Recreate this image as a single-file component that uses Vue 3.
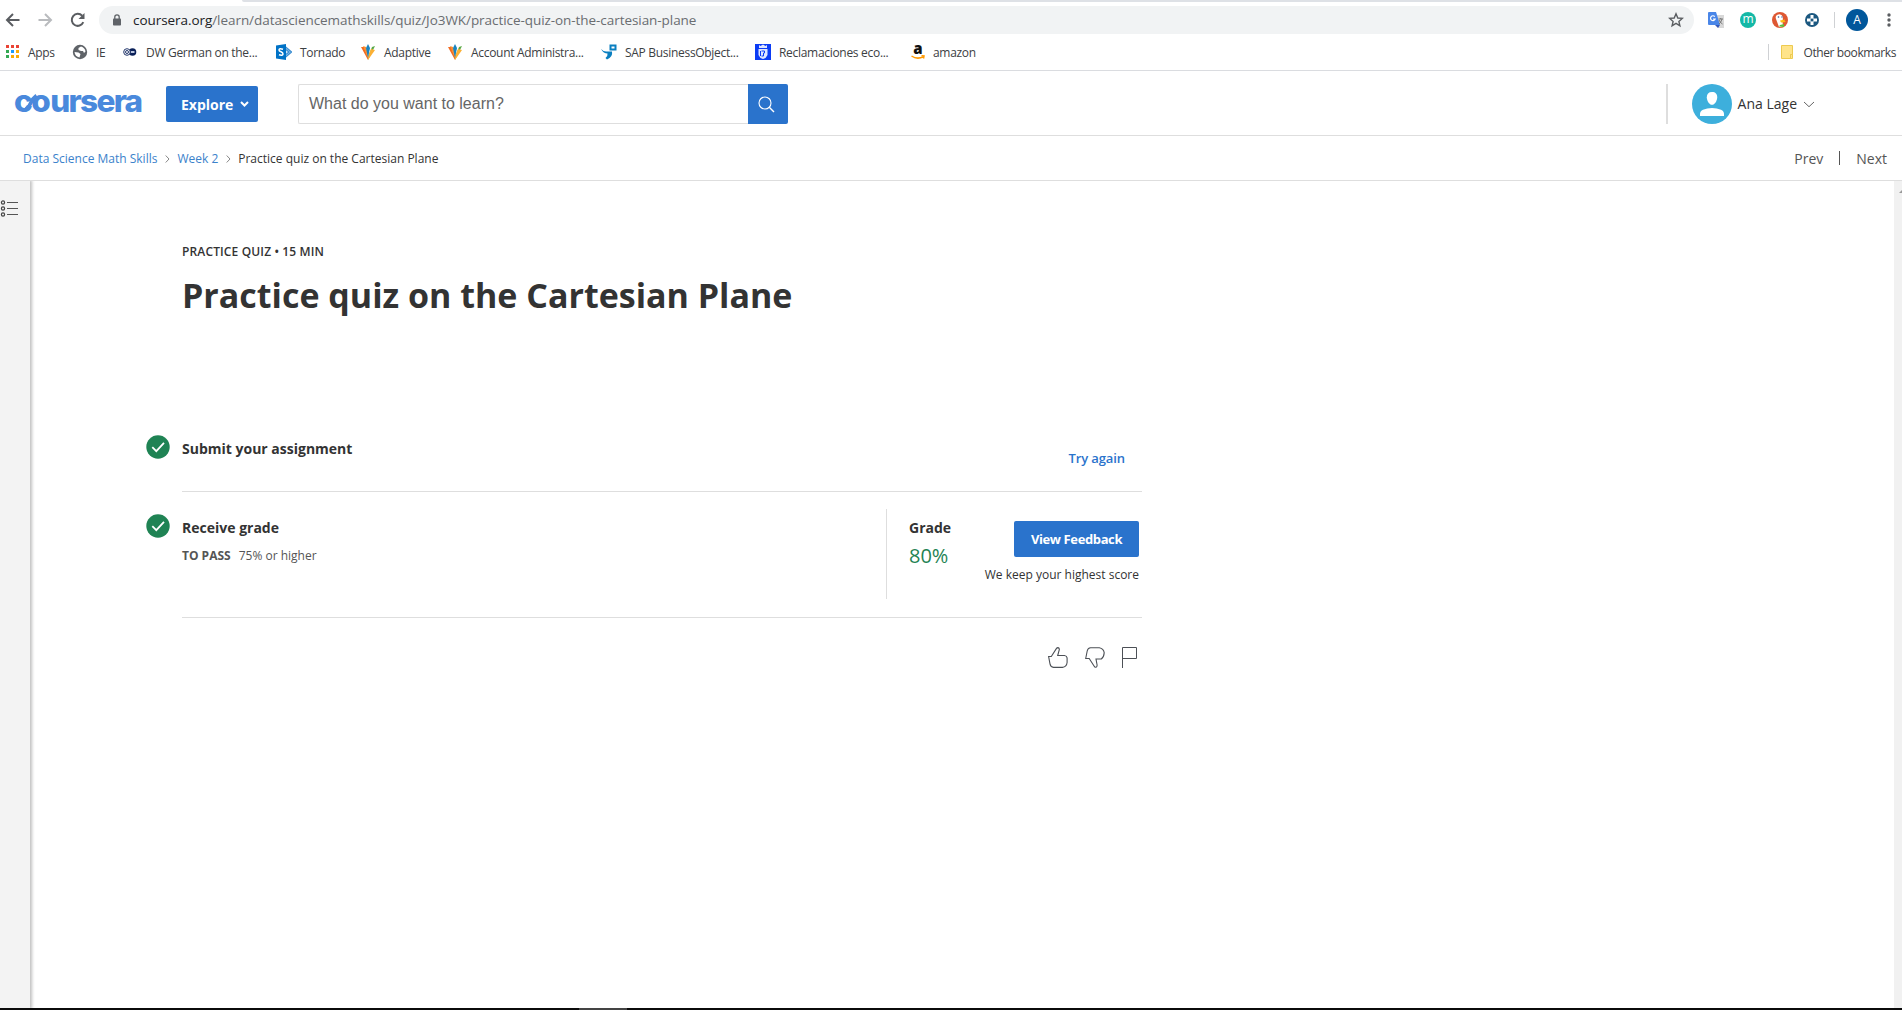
<script setup>
const bookmarks = [
  { icon: 'apps', label: 'Apps', width: 68 },
  { icon: 'globe', label: 'IE', width: 50 },
  { icon: 'dw', label: 'DW German on the...', width: 154 },
  { icon: 'sharepoint', label: 'Tornado', width: 84 },
  { icon: 'adaptive', label: 'Adaptive', width: 87 },
  { icon: 'adaptive', label: 'Account Administra...', width: 154 },
  { icon: 'sap', label: 'SAP BusinessObject...', width: 154 },
  { icon: 'madrid', label: 'Reclamaciones eco...', width: 154 },
  { icon: 'amazon', label: 'amazon', width: 80 },
]
const appColors = ['#ea4335', '#ea4335', '#ea4335', '#34a853', '#1a9bfc', '#fbab05', '#34a853', '#fbab05', '#fbab05']
</script>

<template>
  <div class="screen">
    <div class="tabstrip"></div>
    <div class="toolbar">
      <svg class="nav back" width="16" height="16" viewBox="0 0 16 16"><path d="M14.5 8H2M8 2L2 8l6 6" fill="none" stroke="#5a5d61" stroke-width="2" /></svg>
      <svg class="nav forward" width="16" height="16" viewBox="0 0 16 16"><path d="M1.500 8H14M8 2l6 6-6 6" fill="none" stroke="#b9bbbe" stroke-width="2" /></svg>
      <svg class="nav reload" width="16" height="16" viewBox="0 0 16 16"><path d="M13.300 10.200A6 6 0 1 1 12.200 3.800" fill="none" stroke="#5a5d61" stroke-width="2" /><path d="M14.500 1v6h-6z" fill="#5a5d61" /></svg>
      <div class="omnibox">
        <svg width="8" height="12" viewBox="0 0 8 12"><path d="M.8 4.500h6.400q.8 0 .8.800v5.400q0 .8-.8.800H.8q-.8 0-.8-.8V5.300q0-.8.8-.8z" fill="#5f6368" /><path d="M1.800 5V3a2.200 2.200 0 0 1 4.400 0v2" fill="none" stroke="#5f6368" stroke-width="1.300" /></svg>
        <span class="url"><b>coursera.org</b>/learn/datasciencemathskills/quiz/Jo3WK/practice-quiz-on-the-cartesian-plane</span>
        <svg class="star" width="16" height="16" viewBox="0 0 16 16"><path d="M8 1.800l1.800 4.200 4.500.4-3.400 3 1 4.400L8 11.400l-3.900 2.400 1-4.400-3.400-3 4.500-.4z" fill="none" stroke="#5a5d61" stroke-width="1.400" /></svg>
      </div>
      <svg class="ext translate" width="16" height="16" viewBox="0 0 16 16"><path d="M7 3h9v13H10z" fill="#d8d8d8" /><path d="M0 1q0-1 1-1h7l4 13H1q-1 0-1-1z" fill="#4a86e8" /><path d="M7 13h5l-2 3z" fill="#3457b8" /><path d="M6.800 4.600A2.400 2.400 0 1 0 7.200 7H5" fill="none" stroke="#fff" stroke-width="1.200" /><path d="M10.500 7h4.500M12.700 6v1M14 7q-1 3.500-3 5M11 8q1 2.500 3.500 4" fill="none" stroke="#777" /></svg>
      <span class="ext mdot">m</span>
      <svg class="ext duck" width="16" height="16" viewBox="0 0 16 16"><circle cx="8" cy="8" r="8" fill="#de5833" /><path d="M5 3q4-2 6 2l-.5 5 .5 4q-2 1.500-4 1L4 7q-1-3 1-4z" fill="#fff" /><path d="M8 8.500l5-1-.5 1.500L14 10l-5 .5z" fill="#fdbd14" /><path d="M8 13l4-1v3l-5-.5z" fill="#5dbf3c" /><circle cx="6.500" cy="5" r=".8" fill="#35508a" /><circle cx="10" cy="5" r=".7" fill="#35508a" /></svg>
      <svg class="ext puzzle" width="14" height="14" viewBox="0 0 14 14"><circle cx="7" cy="7" r="7" fill="#1c5880" /><path d="M5.500 2h3v3.500H12v3H8.500V12h-3V8.500H2v-3h3.500z" fill="#fff" /><path d="M5.600 5.600h2.800v2.800H5.600z" fill="#1c5880" /></svg>
      <i class="tooldiv"></i>
      <span class="profile">A</span>
      <svg class="dots" width="4" height="14" viewBox="0 0 4 14"><circle cx="2" cy="2" r="1.700" fill="#5a5d61" /><circle cx="2" cy="7" r="1.700" fill="#5a5d61" /><circle cx="2" cy="12" r="1.700" fill="#5a5d61" /></svg>
    </div>

    <div class="bookmarks">
      <div v-for="(b, i) in bookmarks" :key="i" class="bookmark" :style="{ width: b.width + 'px' }">
        <svg width="16" height="16" viewBox="0 0 16 16">
          <g v-if="b.icon === 'apps'"><rect v-for="(c, n) in appColors" :key="n" :x="2 + (n % 3) * 5" :y="1 + Math.floor(n / 3) * 5" width="3" height="3" :fill="c" /></g>
          <g v-else-if="b.icon === 'globe'"><circle cx="8" cy="8" r="7.200" fill="#5f6368" /><path d="M9 2.600L6.500 4v2L9 7h2l1 2 1.500-1.500Q13 4 9 2.600zM2.500 8l4 .5 2 1.500-1 3.500Q3 12.500 2.500 8z" fill="#fff" /></g>
          <g v-else-if="b.icon === 'dw'"><circle cx="10.500" cy="8" r="3.800" fill="#0a2059" /><circle cx="5" cy="8" r="3.300" fill="#fff" stroke="#24386d" stroke-width="1" /><circle cx="5" cy="8" r="1.500" fill="none" stroke="#24386d" /><path d="M9 8h3.500" stroke="#b9c4dd" stroke-width="2" /></g>
          <g v-else-if="b.icon === 'sharepoint'"><path d="M9 2.500L15.500 8 9 13.500zM10 5.500L13 8l-3 2.500" fill="#cfe4f6" stroke="#3d8fd2" stroke-width="1.300" /><path d="M0 1.500L10 0v16L0 14.500z" fill="#0072c6" /><path d="M7 5.200Q3 3.800 3 6q0 1 2 1.800T7 10q-.4 2-4 .8" fill="none" stroke="#fff" stroke-width="1.500" /></g>
          <g v-else-if="b.icon === 'adaptive'"><path d="M1 3h3l4 10v3z" fill="#f26b21" /><path d="M3 2l3 1 2 6v5z" fill="#f79232" /><path d="M15 2l-3 1-4 10v3z" fill="#58a845" /><path d="M15 6l-4-1-3 7v4z" fill="#fbb034" /><path d="M8 0l2 4-2 10-2-10z" fill="#1a84bf" /></g>
          <g v-else-if="b.icon === 'sap'"><path d="M9.500 1.500h5v4h-5z" fill="#fff" stroke="#0a7fc0" stroke-width="2" /><path d="M0 5q3 3 6 2.500h5Q12 13 6 15.500L4.500 14Q7 12 6.500 9.500 2.500 9.500 0 5z" fill="#0a7fc0" /></g>
          <g v-else-if="b.icon === 'madrid'"><path d="M0 0h16v16H0z" fill="#0b3cf5" /><path d="M4 1l1.500 1L8 .5l2.500 1.500L12 1v3H4zM3.500 5h9v6q-1 3-4.500 4-3.500-1-4.500-4z" fill="#dfe6ff" /><path d="M6.500 7h3v2h-1v3h-2M5.500 7v5" fill="none" stroke="#0b3cf5" /></g>
        </svg>
        <span v-if="b.icon === 'amazon'" class="amz">a<svg width="14" height="5" viewBox="0 0 14 5"><path d="M.5 1q6 4 12 .5M10.500.7l2.500.3-.5 2.500" fill="none" stroke="#f90" stroke-width="1.500" /></svg></span>
        <span class="bm-label">{{ b.label }}</span>
      </div>
      <i class="bm-div"></i>
      <svg class="folder" width="12" height="14" viewBox="0 0 12 14"><path d="M.5.5h11v9H9.500v4H.5z" fill="#ffe48a" stroke="#edca50" /><path d="M9.500 9.500h2v4h-2z" fill="#ffe48a" stroke="#edca50" /></svg>
      <span class="bm-label other">Other bookmarks</span>
    </div>

    <header class="header">
      <div class="logo">
        <span class="lc">c</span><span class="lo">o</span><span class="lrest">ursera</span>
        <svg class="loop" width="18" height="19" viewBox="0 0 18 19"><path d="M4 16Q7.500 13.500 9 9.500T14.500 2.500" fill="none" stroke="#4a89dc" stroke-width="3.600" /></svg>
      </div>
      <button class="explore"><span>Explore</span><svg width="9" height="6" viewBox="0 0 9 6"><path d="M1 1l3.500 3.500L8 1" fill="none" stroke="#fff" stroke-width="2" /></svg></button>
      <div class="search"><span class="placeholder">What do you want to learn?</span></div>
      <div class="search-btn"><svg width="17" height="17" viewBox="0 0 17 17"><circle cx="7" cy="7" r="6" fill="none" stroke="#fff" stroke-width="1.100" /><path d="M11.300 11.300L16 16" stroke="#fff" stroke-width="1.400" /></svg></div>
      <div class="user">
        <svg width="40" height="40" viewBox="0 0 40 40"><circle cx="20" cy="20" r="20" fill="#3dafdc" /><path d="M20 8c3.500 0 5.200 2 5.200 5.200S23 20.800 20 20.800s-5.200-4.400-5.200-7.600S16.500 8 20 8z" fill="#fff" /><path d="M8 32v-2q0-3 3-4.300Q15 24 20 24t9 1.700q3 1.300 3 4.300v2z" fill="#fff" /></svg>
        <span class="name">Ana Lage</span>
        <svg class="caret" width="12" height="7" viewBox="0 0 12 7"><path d="M1 1l5 4.700L11 1" fill="none" stroke="#666" stroke-width="1" /></svg>
      </div>
    </header>

    <nav class="crumbs">
      <a class="c1">Data Science Math Skills</a>
      <svg width="5" height="8" viewBox="0 0 5 8"><path d="M.7.500L4 4 .7 7.500" fill="none" stroke="#888" /></svg>
      <a class="c2">Week 2</a>
      <svg width="5" height="8" viewBox="0 0 5 8"><path d="M.7.500L4 4 .7 7.500" fill="none" stroke="#888" /></svg>
      <span class="c3">Practice quiz on the Cartesian Plane</span>
      <div class="pager"><span>Prev</span><i></i><span>Next</span></div>
    </nav>

    <div class="body">
      <aside class="rail">
        <svg width="18" height="17" viewBox="0 0 18 17"><g fill="none" stroke="#444" stroke-width="1.200"><circle cx="3" cy="2.500" r="1.600" /><circle cx="3" cy="8.500" r="1.600" /><circle cx="3" cy="14.500" r="1.600" /></g><path d="M7 2.500h11M7 8.500h11M7 14.500h11" stroke="#555" stroke-width="1" /></svg>
      </aside>
      <main class="main">
        <p class="kicker">PRACTICE QUIZ • 15 MIN</p>
        <h1>Practice quiz on the Cartesian Plane</h1>
        <section class="step first">
          <svg class="tick" width="24" height="24" viewBox="0 0 24 24"><circle cx="12" cy="12" r="11.700" fill="#1f8354" /><path d="M6.300 12.200l4 3.900L18 7.900" fill="none" stroke="#fff" stroke-width="1.800" /></svg>
          <h2>Submit your assignment</h2>
          <a class="try">Try again</a>
        </section>
        <section class="step second">
          <svg class="tick" width="24" height="24" viewBox="0 0 24 24"><circle cx="12" cy="12" r="11.700" fill="#1f8354" /><path d="M6.300 12.200l4 3.900L18 7.900" fill="none" stroke="#fff" stroke-width="1.800" /></svg>
          <div class="receive">
            <h2 class="rg">Receive grade</h2>
            <p class="pass"><b>TO PASS</b><span>75% or higher</span></p>
          </div>
          <div class="grade">
            <h2 class="gr">Grade</h2>
            <p class="score">80%</p>
          </div>
          <div class="feedback">
            <button class="view"><span>View Feedback</span></button>
            <p class="keep">We keep your highest score</p>
          </div>
        </section>
        <div class="actions">
          <svg width="20" height="21" viewBox="0 0 20 21"><path d="M.6 9.500h2.700L8.500 1.400Q9 .6 10 .6q1.500.4 1.300 2L9.700 8.500h6.800q2.300.3 2.600 2.400v4.600q-.5 4.400-4.600 4.900H5.500q-3-.3-3.500-3.500z" fill="none" stroke="#4c5056" stroke-width="1.100" /></svg>
          <svg width="20" height="21" viewBox="0 0 20 21"><path d="M.7 11.500L2.200 4Q2.800.9 5.600.7h8.700q4.200.7 4.900 5-.2 4.300-2.900 6.300H11l1.100 6q.1 1.800-1 2.200-1.300.3-1.900-1L4.200 11.500z" fill="none" stroke="#4c5056" stroke-width="1.100" /></svg>
          <svg width="16" height="21" viewBox="0 0 16 21"><path d="M.5 21V.5h14v11H.5" fill="none" stroke="#4c5056" stroke-width="1" /></svg>
        </div>
      </main>
      <div class="scrollbar"><svg width="4" height="4" viewBox="0 0 4 4"><path d="M0 4L4 0v4z" fill="#999" /></svg></div>
    </div>
    <div class="taskbar"><i></i></div>
  </div>
</template>

<style>
body { margin: 0; background: #fff; overflow: hidden; }
</style>

<style scoped>
* { box-sizing: border-box; }
svg { display: block; flex: none; }
h1, h2, p { margin: 0; }
.screen { width: 1902px; height: 1010px; display: flex; flex-direction: column; background: #fff; font-family: "Open Sans", "Noto Sans", sans-serif; color: #333; overflow: hidden; white-space: nowrap; }
.tabstrip { height: 2px; margin-left: 242px; background: #dee1e6; flex: none; border-bottom-left-radius: 3px; }
.toolbar { height: 36px; flex: none; display: flex; align-items: center; padding-left: 5px; }
.forward { margin-left: 16px; }
.reload { margin-left: 17px; }
.omnibox { width: 1595px; height: 28px; flex: none; margin-left: 13px; border-radius: 14px; background: #f1f3f4; display: flex; align-items: center; padding: 0 10px 0 14px; }
.url { margin-left: 12px; font-size: 13.500px; letter-spacing: -0.06px; color: #6a6d71; flex: 1; }
.url b { font-weight: 400; color: #202124; }
.translate { margin-left: 14px; }
.mdot { margin-left: 16px; width: 16px; height: 16px; flex: none; border-radius: 50%; background: #14b8a6; color: #fff; font-size: 12px; line-height: 14px; text-align: center; }
.duck { margin-left: 16px; }
.puzzle { margin-left: 17px; }
.tooldiv { width: 1px; height: 16px; margin-left: 15px; background: #cfd1d4; }
.profile { width: 22px; height: 22px; flex: none; margin-left: 11px; border-radius: 50%; background: #01579b; color: #fff; font-size: 12px; line-height: 22px; text-align: center; }
.dots { margin-left: 19px; }
.bookmarks { height: 33px; flex: none; border-bottom: 1px solid #dadce0; display: flex; align-items: center; padding: 0 6px 4px 4px; font-size: 12px; color: #3c4043; }
.bookmark { display: flex; align-items: center; position: relative; }
.bm-label { margin-left: 8px; letter-spacing: -0.3px; }
.amz { position: absolute; left: 2px; top: -3px; width: 14px; text-align: center; font-weight: 800; font-size: 15px; line-height: 15px; color: #111; }
.amz svg { margin-top: -1px; }
.bm-div { width: 1px; height: 16px; background: #cfd1d4; margin-left: auto; }
.folder { margin-left: 12px; }
.other { margin-left: 10px; letter-spacing: -0.4px; }
.header { height: 65px; flex: none; border-bottom: 1px solid #dedede; display: flex; align-items: center; padding-top: 2px; }
.logo { position: relative; width: 128px; height: 36px; margin: -7px 0 0 14px; display: flex; font-family: Inter, sans-serif; font-weight: 800; font-size: 31.500px; line-height: 36px; color: #4a89dc; }
.lc { letter-spacing: -1.500px; }
.lo { letter-spacing: -0.500px; }
.lrest { letter-spacing: -1.700px; }
.loop { position: absolute; left: 8px; top: 10px; }
.explore { width: 92px; height: 36px; margin-left: 24px; padding: 0 9px 0 15px; border: 0; border-radius: 2px; background: #2a73cc; color: #fff; font: 700 14px "Open Sans", sans-serif; display: flex; align-items: center; justify-content: space-between; }
.search { width: 450px; height: 40px; margin-left: 40px; border: 1px solid #dedede; border-right: 0; border-radius: 2px 0 0 2px; padding-left: 10px; line-height: 37px; font-family: "Liberation Sans", Arial, sans-serif; font-size: 16px; color: #666; }
.search-btn { width: 40px; height: 40px; background: #2a73cc; border-radius: 0 2px 2px 0; padding: 12px 0 0 10px; }
.user { height: 40px; margin: 0 87px 0 auto; padding-left: 24px; border-left: 2px solid #dedede; display: flex; align-items: center; }
.name { margin: -1px 0 0 6px; font-size: 14px; }
.caret { margin-left: 6px; }
.crumbs { height: 45px; flex: none; border-bottom: 1px solid #dedede; display: flex; align-items: center; padding: 0 15px 0 23px; font-size: 12px; }
.crumbs a { color: #3b82cb; }
.crumbs svg { margin: 2px 7px 0 8px; }
.pager { margin-left: auto; display: flex; align-items: center; font-size: 14px; color: #555; }
.pager i { width: 1px; height: 14px; margin: 0 16px; background: #555; }
.body { flex: 1; min-height: 0; display: flex; }
.rail { width: 30px; background: #f3f3f3; box-shadow: 1px 0 3px 1px rgba(0, 0, 0, .25); clip-path: inset(0 -8px 0 0); padding-top: 19px; }
.main { width: 1002px; margin-left: 110px; padding-top: 62px; }
.kicker { font-size: 12px; line-height: 18px; font-weight: 600; letter-spacing: .14px; margin-left: 42px; }
h1 { font-size: 34px; line-height: 48px; font-weight: 700; margin: 10px 0 0 42px; }
.step { margin-left: 42px; width: 960px; position: relative; border-bottom: 1px solid #dedede; display: flex; }
.tick { position: absolute; left: -36px; }
.first { height: 72px; margin-top: 101px; justify-content: space-between; }
.first .tick { top: 15px; }
h2 { font-size: 14px; line-height: 20px; font-weight: 700; }
.first h2 { margin-top: 19px; }
.try { margin: 29px 17px 0 0; font-size: 13px; line-height: 18px; font-weight: 600; letter-spacing: -0.1px; color: #2a73cc; }
.second { height: 126px; }
.second .tick { top: 22px; }
.receive { width: 704px; padding-top: 26px; }
.pass { margin-top: 9px; font-size: 12px; line-height: 18px; color: #555; display: flex; gap: 8px; }
.grade { height: 90px; margin-top: 17px; padding: 9px 0 0 22px; border-left: 1px solid #dedede; }
.score { font-size: 20px; line-height: 28px; margin-top: 4px; color: #1f8354; }
.feedback { margin: 29px 3px 0 auto; display: flex; flex-direction: column; align-items: flex-end; }
.view { width: 125px; height: 36px; padding: 0; border: 0; border-radius: 2px; background: #2a73cc; color: #fff; font: 700 13px "Open Sans", sans-serif; letter-spacing: -0.38px; }
.keep { font-size: 12px; line-height: 18px; margin-top: 9px; }
.actions { display: flex; justify-content: flex-end; gap: 17px; padding: 29px 4px 0 0; }
.scrollbar { width: 8px; margin-left: auto; background: #f1f1f1; padding: 8px 0 0 5px; }
.taskbar { height: 2px; flex: none; background: #0b0b0b; }
.taskbar i { display: block; width: 48px; height: 2px; margin-left: 579px; background: #444; }
</style>
